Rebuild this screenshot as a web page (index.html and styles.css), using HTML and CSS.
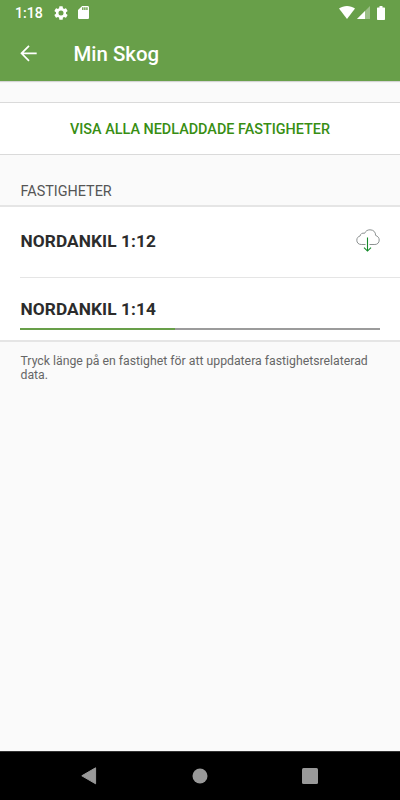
FILE: index.html
```html
<!DOCTYPE html>
<html lang="sv">
<head>
<meta charset="utf-8">
<title>Min Skog</title>
<link rel="stylesheet" href="styles.css">
</head>
<body>
<div class="screen">
  <header class="header">
    <div class="status">
      <span class="time">1:18</span>
      <svg class="gear" width="14" height="14" viewBox="2 2 20 20"><path fill="#fff" d="M19.14 12.94c.04-.3.06-.61.06-.94 0-.32-.02-.64-.07-.94l2.03-1.58a.49.49 0 0 0 .12-.61l-1.92-3.32a.49.49 0 0 0-.59-.22l-2.39.96c-.5-.38-1.03-.7-1.62-.94l-.36-2.54a.48.48 0 0 0-.48-.41h-3.84a.47.47 0 0 0-.47.41l-.36 2.54c-.59.24-1.13.57-1.62.94l-2.39-.96a.48.48 0 0 0-.59.22L2.74 8.87a.47.47 0 0 0 .12.61l2.03 1.58c-.05.3-.09.63-.09.94s.02.64.07.94l-2.03 1.58a.49.49 0 0 0-.12.61l1.92 3.32c.12.22.37.29.59.22l2.39-.96c.5.38 1.03.7 1.62.94l.36 2.54c.05.24.24.41.48.41h3.84c.24 0 .44-.17.47-.41l.36-2.54c.59-.24 1.13-.56 1.62-.94l2.39.96c.22.08.47 0 .59-.22l1.92-3.32a.47.47 0 0 0-.12-.61l-2.01-1.58zM12 15.6a3.6 3.6 0 1 1 0-7.2 3.6 3.6 0 0 1 0 7.2z"/></svg>
      <svg class="card" width="11" height="13" viewBox="4 2 16 20" preserveAspectRatio="none"><path fill="#fff" d="M18 2h-8L4 8v12c0 1.100.9 2 2 2h12c1.100 0 2-.9 2-2V4c0-1.100-.9-2-2-2zm-6 6h-2V4h2v4zm3 0h-2V4h2v4zm3 0h-2V4h2v4z"/></svg>
      <svg class="wifi" width="16" height="13" viewBox="0 0 16 13"><path fill="#fff" d="M0 2.600C4.500-.8 11.500-.8 16 2.600L8 13z"/></svg>
      <svg class="signal" width="13" height="13" viewBox="0 0 13 13"><path fill="#fff" fill-opacity=".35" d="M13 0v13H0z"/><path fill="#fff" d="M8 5v8H0z"/></svg>
      <svg class="battery" width="8" height="14" viewBox="0 0 8 14"><path fill="#fff" d="M2.500 0h3v1.400H7.300q.7 0 .7.700V13.300q0 .7-.7.700H.7q-.7 0-.7-.7V2.100q0-.7.700-.7H2.500z"/></svg>
    </div>
    <div class="toolbar">
      <svg class="back" width="17" height="17" viewBox="0 0 17 17"><path fill="none" stroke="#fff" stroke-width="1.700" d="M9 .8L1.500 8.300 9 15.800M1.500 8.300H16.700"/></svg>
      <h1 class="title">Min Skog</h1>
    </div>
  </header>
  <main class="content">
    <button class="show-all">VISA ALLA NEDLADDADE FASTIGHETER</button>
    <h2 class="section">FASTIGHETER</h2>
    <div class="list">
      <div class="row first">
        <span class="name">NORDANKIL 1:12</span>
        <svg class="cloud" width="24" height="24" viewBox="0 0 24 24" fill="none"><path stroke="#8d9292" stroke-width="1" d="M9.500 15.500H5.300C2.500 15.500.8 13.700.8 11.200c0-2.300 1.400-3.800 3.300-4.200C4.300 4.900 6.300 3.600 8.600 4.300 9.700 1.900 11.500.8 14 .8c3.500 0 5.700 2.300 5.600 5.600 2.200.8 3.600 2.300 3.600 4.600 0 2.700-1.700 4.500-4.300 4.500h-5.400"/><path stroke="#168a2b" stroke-width="1.100" d="M11.500 8.500v13.300M8 18.700l3.500 3.400 3.500-3.400"/></svg>
      </div>
      <div class="row second">
        <span class="name">NORDANKIL 1:14</span>
        <div class="track"><div class="fill" style="width:43%"></div></div>
      </div>
    </div>
    <p class="hint">Tryck länge på en fastighet för att uppdatera fastighetsrelaterad data.</p>
  </main>
  <nav class="nav">
    <svg width="16" height="18" viewBox="0 0 16 18"><path fill="#999" d="M14.600.8V16.800L.8 8.800z" stroke="#999" stroke-linejoin="round"/></svg>
    <svg width="16" height="16" viewBox="0 0 16 16"><circle cx="8" cy="8" r="7.500" fill="#999"/></svg>
    <svg width="16" height="16" viewBox="0 0 16 16"><rect width="16" height="16" rx="1.500" fill="#999"/></svg>
  </nav>
</div>
</body>
</html>
```
FILE: styles.css
```css
* { box-sizing: border-box; }
body { margin: 0; font-family: Roboto, sans-serif; }
svg { display: block; flex: none; }
.screen { width: 400px; height: 800px; display: flex; flex-direction: column; background: #fafafa; }
.header { height: 81px; background: #689f49; color: #fff; box-shadow: 0 1px 1px rgba(0,0,0,.15); }
.status { height: 25px; display: flex; align-items: center; padding: 0 15px; }
.time { width: 39px; padding-top: 1px; font-size: 14.2px; font-weight: 500; line-height: 25px; }
.card { margin-left: 10px; }
.wifi { margin-left: auto; }
.signal { margin-left: 2px; }
.battery { margin-left: 7px; }
.toolbar { height: 56px; display: flex; align-items: center; padding-left: 20px; }
.title { margin: 0 0 0 36.5px; padding-top: 2px; font-size: 20.4px; font-weight: 500; }
.content { flex: 1; }
.show-all { display: block; width: 100%; height: 53px; margin: 21px 0 0; padding: 2px 0 0; border: 0; border-top: 1px solid #dadada; border-bottom: 1px solid #dadada; background: #fff; color: #388e13; font: 500 14.4px Roboto, sans-serif; }
.section { height: 50px; margin: 0; padding: 28px 0 0 20.5px; font-size: 14.4px; font-weight: 400; line-height: 17px; color: #555; }
.list { background: #fff; border-top: 2px solid #e5e5e5; border-bottom: 2px solid #e5e5e5; }
.row { margin-left: 20px; padding-right: 20px; }
.first { height: 71px; display: flex; justify-content: space-between; align-items: center; border-bottom: 1px solid #e5e5e5; }
.name { padding-left: .5px; font-size: 17.3px; font-weight: 700; line-height: 20px; letter-spacing: .08px; color: #2c2c2c; }
.first .name { padding-bottom: 2px; }
.cloud { margin-bottom: 2px; }
.second { height: 62px; padding-top: 21px; display: flex; flex-direction: column; }
.track { height: 2px; margin-top: 9px; background: #9b9b9b; }
.fill { height: 2px; background: #689f49; }
.hint { margin: 0; padding: 12px 20px 12px 20.5px; font-size: 12.28px; line-height: 14.4px; color: #666; }
.nav { height: 49px; background: #000; border-top: 1px solid #333; display: flex; justify-content: space-between; align-items: center; padding: 0 82px 0 81px; }
```
